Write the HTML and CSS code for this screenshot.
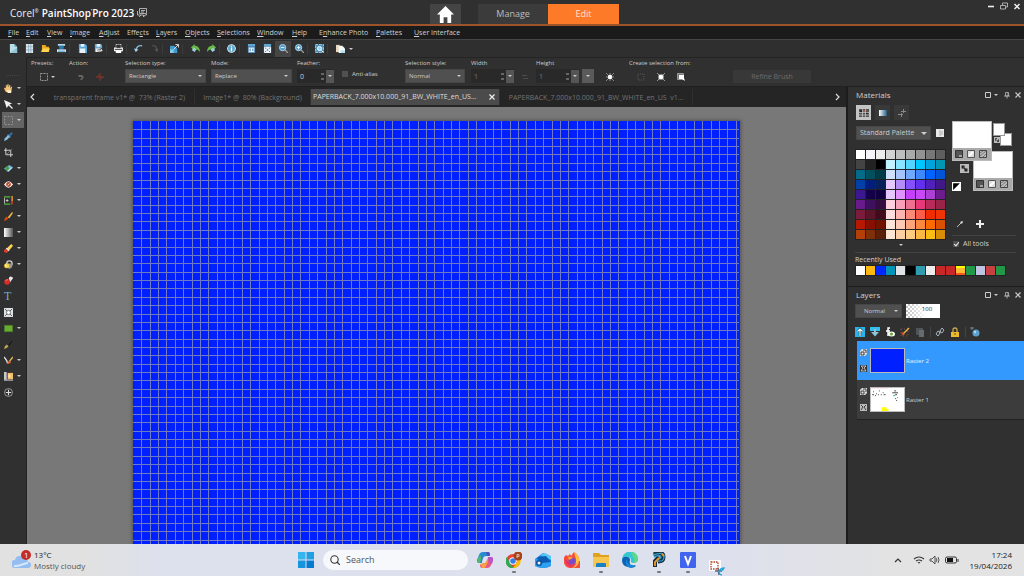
FILE: index.html
```html
<!DOCTYPE html>
<html lang="en">
<head>
<meta charset="utf-8">
<title>Corel PaintShop Pro 2023</title>
<link rel="stylesheet" href="styles.css">
</head>
<body>
<div class="app">
  <header class="titlebar">
    <div class="brand"><span class="brand-corel">Corel<sup>®</sup></span><span class="brand-name">PaintShop<sup>'</sup>Pro 2023</span>
      <svg class="i10" viewBox="0 0 10 10"><path d="M2.500.5h7v5h-7zM4 2.500h4M4 4h3M.5 3v4h6v2L8 7h1.500V6M2 9l2-2" fill="none" stroke="#bbb" stroke-width=".9"/></svg>
    </div>
    <nav class="modes">
      <button class="mode home" aria-label="Home"><svg viewBox="0 0 18 18"><path d="M9 0l9 9h-3v9h-4v-6H7v6H3V9H0z" fill="#fff"/></svg></button>
      <button class="mode manage">Manage</button>
      <button class="mode edit">Edit</button>
    </nav>
    <div class="window-controls">
      <button aria-label="Minimize"><svg class="i8" viewBox="0 0 8 8"><path d="M1 4.500h6" stroke="#eee" stroke-width="1.600"/></svg></button>
      <button aria-label="Restore"><svg class="i8" viewBox="0 0 8 8"><path d="M2.500 3V1h5v4H6M.5 3.500h5v3.500h-5z" fill="none" stroke="#ccc" stroke-width=".8"/></svg></button>
      <button aria-label="Close"><svg class="i8" viewBox="0 0 8 8"><path d="M1.500 2l5 5m0-5l-5 5" stroke="#eee" stroke-width="1.500"/></svg></button>
    </div>
  </header>

  <nav class="menubar">
    <a href="#"><u>F</u>ile</a><a href="#"><u>E</u>dit</a><a href="#"><u>V</u>iew</a><a href="#"><u>I</u>mage</a><a href="#"><u>A</u>djust</a><a href="#">Effe<u>c</u>ts</a><a href="#"><u>L</u>ayers</a><a href="#"><u>O</u>bjects</a><a href="#"><u>S</u>elections</a><a href="#"><u>W</u>indow</a><a href="#"><u>H</u>elp</a><a href="#">E<u>n</u>hance Photo</a><a href="#"><u>P</u>alettes</a><a href="#"><u>U</u>ser Interface</a>
  </nav>

  <div class="toolbar">
    <button aria-label="New"><svg viewBox="0 0 10 10"><path d="M1 0h5l3 3v7H1z" fill="#b9dfe9"/><path d="M6 0v3h3z" fill="#5f9fb5"/><path d="M1 10l8-6v6z" fill="#8fc4d6"/></svg></button>
    <button aria-label="New from template"><svg viewBox="0 0 10 10"><path d="M1 0h8v10H1z" fill="#dbe6ee"/><path d="M1 3h8M1 6.500h8M4 0v10M6.500 0v10" stroke="#7f9eb5" stroke-width=".7"/></svg></button>
    <button aria-label="Open"><svg viewBox="0 0 10 10"><path d="M1 1h4l1 2h3v6H1z" fill="#e9a91a"/><path d="M0 9l2-4h8L8 9z" fill="#ffd552"/></svg></button>
    <button aria-label="Scan"><svg viewBox="0 0 10 10"><path d="M1 0h8v2H1z" fill="#b8dcf0"/><path d="M2 2h6L7 6H3z" fill="#257cad"/><path d="M0 6h10v3H0z" fill="#dceaf2"/><path d="M1 8h8" stroke="#2e90c9"/></svg></button>
    <i class="sep wide"></i>
    <button aria-label="Save"><svg viewBox="0 0 10 10"><path d="M1 0h7l2 2v8H1z" fill="#5ba7d8"/><path d="M3 0h4v3H3zM2 5h6v5H2z" fill="#e7f2f8"/></svg></button>
    <button aria-label="Save as"><svg viewBox="0 0 10 10"><path d="M1 0h7l1 2v7H1z" fill="#68a9d4"/><path d="M3 0h4v3H3zM2 5h5v4H2z" fill="#eee"/><path d="M4 7h5M7 5l2 2-2 2" stroke="#222" stroke-width="2" fill="none"/><path d="M4 7h5M7 5l2 2-2 2" stroke="#fff" fill="none"/></svg></button>
    <i class="sep"></i>
    <button aria-label="Print"><svg viewBox="0 0 10 10"><path d="M2 0h6v4h2v4H0V4h2z" fill="#eee"/><path d="M3 1h4v3H3zM1 6h8" fill="#303030" stroke="#333"/><path d="M2 7h6v3H2z" fill="#fff"/></svg></button>
    <i class="sep"></i>
    <button aria-label="Undo"><svg viewBox="0 0 10 10"><path d="M9 2C5 1 2 4 2 8" fill="none" stroke="#83b9da" stroke-width="1.600"/><path d="M0 5l2 4 3-3z" fill="#a8d4ee"/></svg></button>
    <button aria-label="Redo"><svg viewBox="0 0 10 10"><path d="M2 2c4-1 6 2 6 6" fill="none" stroke="#485057" stroke-width="1.500"/><path d="M5 6l3 3 1-4z" fill="#505960"/></svg></button>
    <i class="sep"></i>
    <button aria-label="Resize"><svg viewBox="0 0 10 10"><path d="M0 2h8v8H0z" fill="#3c9ace"/><path d="M0 6h4v4H0z" fill="#8cc6e6"/><path d="M4 1h5v5z" fill="#303030"/><path d="M4 6l5-5M6 .5h3.500V4" fill="none" stroke="#eee"/></svg></button>
    <i class="sep wide"></i>
    <button aria-label="Rotate left"><svg viewBox="0 0 10 10"><path d="M0 4l4-4v2c4 0 6 3 6 7-2-3-3-3-6-3v2z" fill="#67b947"/><path d="M3 4l3 2-2 3-3-2z" fill="#9ccbe0"/></svg></button>
    <button aria-label="Rotate right"><svg viewBox="0 0 10 10"><path d="M10 4L6 0v2C2 2 0 5 0 9c2-3 3-3 6-3v2z" fill="#67b947"/><path d="M7 4L4 6l2 3 3-2z" fill="#9ccbe0"/></svg></button>
    <i class="sep"></i>
    <button aria-label="Information"><svg viewBox="0 0 10 10"><circle cx="5" cy="5" r="4.800" fill="#eef7fb"/><circle cx="5" cy="5" r="3.800" fill="#5ca8cf"/><path d="M5 4v4M5 2v1" stroke="#fff" stroke-width="1.400"/></svg></button>
    <i class="sep"></i>
    <button aria-label="Actual size"><svg viewBox="0 0 10 10"><path d="M1 0h8v3H1z" fill="#5ea6d4"/><path d="M1 3h8v7H1z" fill="#5487b5"/><path d="M2 4h6v5H2z" fill="#eef6fc"/><path d="M3.500 5v3M6.500 5v3" stroke="#2973ab"/></svg></button>
    <button aria-label="Fit window"><svg viewBox="0 0 10 10"><path d="M1 0h8v3H1z" fill="#5ea6d4"/><path d="M1 3h8v7H1z" fill="#eef6fc"/><path d="M2 4l6 5M8 4L2 9" stroke="#4479a7" stroke-dasharray="2 1"/></svg></button>
    <button class="on" aria-label="Zoom out"><svg viewBox="0 0 10 10"><circle cx="4" cy="4" r="3.500" fill="#4a9bd0" stroke="#b6daf0"/><path d="M6.500 6.500L10 10" stroke="#999" stroke-width="1.500"/><path d="M2 4h4" stroke="#fff"/></svg></button>
    <button aria-label="Zoom in"><svg viewBox="0 0 10 10"><circle cx="4" cy="4" r="3.500" fill="#4a9bd0" stroke="#b6daf0"/><path d="M6.500 6.500L10 10" stroke="#999" stroke-width="1.500"/><path d="M2 4h4M4 2v4" stroke="#fff"/></svg></button>
    <i class="sep"></i>
    <button aria-label="Full screen"><svg viewBox="0 0 10 10"><path d="M.5.5h9v9h-9z" fill="#4d91ba" stroke="#a8cfe2" stroke-dasharray="3 1"/><circle cx="5" cy="5" r="2.300" fill="#9ed0ec" stroke="#fff"/><path d="M7 7l2 2" stroke="#fff"/></svg></button>
    <i class="sep wide"></i>
    <button aria-label="Copy"><svg viewBox="0 0 10 10"><path d="M0 1h4v8H0z" fill="#e8d7bc"/><path d="M3 2h4l3 3v5H3z" fill="#f2fafc"/><path d="M5 7h5v3H5z" fill="#b7deeb"/></svg></button>
    <i class="caret"></i>
  </div>

  <div class="workspace">
    <aside class="tools" id="tools">
      <i class="grip"></i>
      <button aria-label="Pan"><svg viewBox="0 0 10 10"><path d="M2 9L0 5l1-1 1 1V1h1v3l1-4h1v4l1-3h1v4l1-2h1L8 9z" fill="#f6c375"/><path d="M3 7h5v3H4z" fill="#fff0ce"/></svg><i class="caret"></i></button>
      <button aria-label="Pick"><svg viewBox="0 0 10 10"><path d="M0 0l9 4-3 1 4 4-1 1-4-4-2 3z" fill="#f1f1f1"/></svg><i class="caret"></i></button>
      <button class="on" aria-label="Selection"><svg viewBox="0 0 10 10"><path d="M.5.5h9v9h-9z" fill="none" stroke="#999" stroke-dasharray="2 1.500"/></svg><i class="caret"></i></button>
      <button aria-label="Dropper"><svg viewBox="0 0 10 10"><path d="M0 10l1-3 4-4 2 2-4 4z" fill="#86bfe0"/><path d="M4 3l3 3" stroke="#6ba7d1" stroke-width="1.400"/><path d="M6 4l3-3" stroke="#2878bd" stroke-width="2.200"/></svg></button>
      <button aria-label="Crop"><svg viewBox="0 0 10 10"><path d="M2 0v7.500h8M0 2.500h7.500V10" fill="none" stroke="#ddd"/><path d="M3 7l6-6" stroke="#999" stroke-width=".7"/></svg></button>
      <button aria-label="Straighten"><svg viewBox="0 0 10 10"><path d="M0 5l6-4 4 3-5 5z" fill="#76b9dd"/><path d="M1 4l3-2 2 3-3 3z" fill="#4a9a48"/><path d="M4 8l5-4" stroke="#d7edf7"/></svg><i class="caret"></i></button>
      <button aria-label="Red eye"><svg viewBox="0 0 10 10"><path d="M0 5q5-7 10 0-5 7-10 0" fill="#f5eeee"/><circle cx="5" cy="5" r="2.700" fill="#b54d31"/><path d="M4 6l2-2" stroke="#f2d8cc"/></svg><i class="caret"></i></button>
      <button aria-label="Clone"><svg viewBox="0 0 10 10"><path d="M0 1h7M0 9h7" stroke="#54b63d" stroke-width="1.300"/><path d="M.5 2v6M3.500 3.500v3M2 5h3" stroke="#ddd" stroke-width=".9"/><path d="M9 0v6" stroke="#e69b33" stroke-width="1.600"/><path d="M8 6h2v3l-2 1z" fill="#bd402b"/></svg><i class="caret"></i></button>
      <button aria-label="Paint brush"><svg viewBox="0 0 10 10"><path d="M4 6l5-6 1 1-4 6z" fill="#f2b648"/><path d="M3 5l2 2-2 2-3 1 1-3z" fill="#d44b18"/></svg><i class="caret"></i></button>
      <button aria-label="Gradient"><svg viewBox="0 0 10 10"><defs><linearGradient id="gg"><stop stop-color="#fff"/><stop offset="1" stop-color="#555"/></linearGradient></defs><path d="M0 0h10v10H0z" fill="url(#gg)"/></svg><i class="caret"></i></button>
      <button aria-label="Eraser"><svg viewBox="0 0 10 10"><path d="M3 5l5-5 2 2-5 6z" fill="#ffd352"/><path d="M2 5l3 3-2 2-3-1V7z" fill="#df3c27"/><path d="M2.500 4.500l3 3" stroke="#eee" stroke-width="1.200"/></svg><i class="caret"></i></button>
      <button aria-label="Flood fill"><svg viewBox="0 0 10 10"><circle cx="6" cy="4" r="3" fill="none" stroke="#ccc" stroke-width="1.500"/><path d="M4 4h5v4L6 10 2 7z" fill="#9b9b91"/><circle cx="3" cy="6.500" r="2.800" fill="#f4ce45"/><circle cx="2" cy="6" r="1" fill="#fff6b4"/></svg><i class="caret"></i></button>
      <button aria-label="Color changer"><svg viewBox="0 0 10 10"><path d="M5 5l3-4 2 1-3 5z" fill="#ddd"/><circle cx="7.500" cy="2.500" r="2" fill="#e9e9e9"/><circle cx="3.500" cy="6.500" r="3.200" fill="#de2929"/><path d="M2 5l2-1" stroke="#ff9d8d"/></svg></button>
      <button aria-label="Text" class="text-tool">T</button>
      <button aria-label="Texture"><svg viewBox="0 0 10 10"><path d="M0 0h10v10H0z" fill="#dde2e5"/><path d="M1 1l8 8M9 1L1 9" stroke="#444" stroke-width=".9"/><circle cx="5" cy="5" r="2.300" fill="#fff" stroke="#555" stroke-width=".8"/></svg></button>
      <button aria-label="Rectangle"><svg viewBox="0 0 10 10"><path d="M.5 1.500h9v7h-9z" fill="#66ad31" stroke="#4c8026" stroke-dasharray="2 1"/></svg><i class="caret"></i></button>
      <button aria-label="Oil brush"><svg viewBox="0 0 10 10"><path d="M4 6l5-6 1 1-4 6z" fill="#101010" stroke="#555" stroke-width=".4"/><path d="M3 5l2 2-2 2-3 1 1-3z" fill="#bba851"/></svg></button>
      <button aria-label="Warp brush"><svg viewBox="0 0 10 10"><path d="M0 1l3 4 1 3" fill="none" stroke="#ddd" stroke-width="1.600"/><path d="M10 1L6 6" stroke="#ecbb5a" stroke-width="1.500"/><path d="M6 5l2 2-3 2-2-1z" fill="#dd6a33"/></svg><i class="caret"></i></button>
      <button aria-label="Mixer"><svg viewBox="0 0 10 10"><path d="M0 0h3v9H0z" fill="#c8c8c8"/><path d="M4 1h6v7H4z" fill="#f3bc69"/><path d="M0 9h10" stroke="#aaa" stroke-width="1.500"/><path d="M5 3h2v3H5z" fill="#fff0c8"/></svg><i class="caret"></i></button>
      <button aria-label="Add tools"><svg viewBox="0 0 10 10"><circle cx="5" cy="5" r="4.400" fill="none" stroke="#bbb" stroke-width=".8"/><path d="M5 2v6M2 5h6" stroke="#ddd" stroke-width="1.200"/></svg></button>
    </aside>

    <div class="content">
      <div class="options">
        <div class="field"><span class="lab">Presets:</span><button class="ctl flat" aria-label="Presets"><svg class="i8" viewBox="0 0 8 8"><path d="M.5.5h7v7h-7z" fill="none" stroke="#999" stroke-dasharray="2 1"/></svg><i class="caret"></i></button></div>
        <div class="field"><span class="lab">Action:</span><div class="ctl pair"><svg class="i8" viewBox="0 0 8 8"><path d="M1 2h4l2 2-2 3H3l2-3H2z" fill="#66655f"/></svg><svg class="i8" viewBox="0 0 8 8"><path d="M4 0v8M0 4h8M2 2l4 4" stroke="#743329" stroke-width="1.300"/></svg></div></div>
        <div class="field"><label class="lab" for="seltype">Selection type:</label><span class="pick w80"><select id="seltype"><option>Rectangle</option></select></span></div>
        <div class="field"><label class="lab" for="mode">Mode:</label><span class="pick w80"><select id="mode"><option>Replace</option></select></span></div>
        <div class="field"><label class="lab" for="feather">Feather:</label><span class="spin"><input id="feather" value="0"><i class="updown"></i><button aria-label="Feather slider"><i class="caret"></i></button></span></div>
        <label class="check alias"><input type="checkbox">Anti-alias</label>
        <div class="field"><label class="lab" for="style">Selection style:</label><span class="pick w59"><select id="style"><option>Normal</option></select></span></div>
        <div class="field dim"><label class="lab" for="sw">Width</label><span class="spin wide"><input id="sw" value="1"><i class="updown"></i><button aria-label="Width slider"><i class="caret"></i></button></span></div>
        <svg class="i8 swap" viewBox="0 0 8 8"><path d="M1 2.500h5M2 5.500h5" stroke="#4c4c4c"/></svg>
        <div class="field dim"><label class="lab" for="sh">Height</label><span class="spin wide"><input id="sh" value="1"><i class="updown"></i><button aria-label="Height slider"><i class="caret"></i></button></span></div>
        <button class="more" aria-label="More"><i class="caret"></i></button>
        <svg class="i8 star" viewBox="0 0 8 8"><path d="M0 0l8 8M8 0L0 8M4 0v8M0 4h8" stroke="#888"/><circle cx="4" cy="4" r="2.200" fill="#fff"/></svg>
        <div class="field"><span class="lab">Create selection from:</span><div class="ctl trio"><svg class="i8" viewBox="0 0 8 8"><path d="M1 1h6v6H1z" fill="none" stroke="#555" stroke-dasharray="1 1"/></svg><svg class="i8" viewBox="0 0 8 8"><path d="M1 1h6v6H1z" fill="#777"/><path d="M0 0l8 8M8 0L0 8" stroke="#999"/><circle cx="4" cy="4" r="2.300" fill="#fff"/></svg><svg class="i8" viewBox="0 0 8 8"><path d="M.5.5h6v6h-6z" fill="#777" stroke="#999"/><path d="M2 2h5v3l1 3-3-2H2z" fill="#fff"/></svg></div></div>
        <button class="refine" disabled>Refine Brush</button>
      </div>

      <div class="main">
        <section class="document">
          <div class="tabs">
            <button class="arrow" aria-label="Scroll left"><svg viewBox="0 0 5 8"><path d="M4 1L1 4l3 3" fill="none" stroke="#ddd" stroke-width="1.200"/></svg></button>
            <button class="tab t1">transparent frame v1* @&nbsp; 73% (Raster 2)</button>
            <button class="tab t2">Image1* @&nbsp; 80% (Background)</button>
            <button class="tab t3 active"><span>PAPERBACK_7.000x10.000_91_BW_WHITE_en_US...</span><svg viewBox="0 0 6 6"><path d="M.5.5l5 5m0-5l-5 5" stroke="#eee" stroke-width="1.200"/></svg></button>
            <button class="tab t4">PAPERBACK_7.000x10.000_91_BW_WHITE_en_US&nbsp; v1...</button>
            <button class="arrow right" aria-label="Scroll right"><svg viewBox="0 0 5 8"><path d="M1 1l3 3-3 3" fill="none" stroke="#ddd" stroke-width="1.200"/></svg></button>
          </div>
          <div class="stage"><div class="sheet"><svg id="sheet-grid" width="100%" height="100%"></svg></div></div>
        </section>

        <aside class="panels">
          <section class="panel materials">
            <div class="panel-head"><h2>Materials</h2><svg class="panel-icons" viewBox="0 0 38 8"><path d="M1.500 1.500h5v5h-5z" fill="none" stroke="#ccc"/><path d="M10 3h4l-2 2z" fill="#ccc"/><path d="M21.500 1.500h3V5h-3zM20 5h6M23 5v2.500M24 2v3" fill="none" stroke="#aaa" stroke-width=".9"/><path d="M31.500 1.500l5 5m0-5l-5 5" stroke="#ccc" stroke-width="1.200"/></svg></div>
            <div class="mat-tabs">
              <button class="on" aria-label="Swatches"><svg class="i10" viewBox="0 0 10 10"><path d="M0 1h10v8H0z" fill="#555"/><path d="M1 2h2v2H1zM7 4h2v2H7z" fill="#252525"/><path d="M4 2h2v2H4z" fill="#9b5a50"/><path d="M0 4.500h10M0 7h10M3.500 1v8M6.500 1v8" stroke="#ccc" stroke-width=".7"/></svg></button>
              <button aria-label="Color"><svg class="i10" viewBox="0 0 10 10"><defs><linearGradient id="cg"><stop stop-color="#fff"/><stop offset="1" stop-color="#245b7d"/></linearGradient></defs><path d="M1 2h8v6H1z" fill="url(#cg)"/></svg></button>
              <button aria-label="Sliders"><svg class="i10" viewBox="0 0 10 10"><path d="M1 6.500h5M4 3.500h5M6.500 1v4M4.500 5v4" stroke="#888"/></svg></button>
            </div>
            <div class="mat-body">
              <div class="mat-left">
                <div class="palette-row"><span class="pick w75"><select aria-label="Palette"><option>Standard Palette</option></select></span><svg class="i8" viewBox="0 0 8 8"><path d="M0 0h8v8H0z" fill="#e9e9e9"/><path d="M4 1v6M5 3h2M5 5h2" stroke="#999" stroke-width=".8"/></svg></div>
                <div class="swatches" id="palette"></div>
                <i class="caret mid"></i>
              </div>
              <div class="mat-right">
                <div class="colors">
                  <div class="well back"><svg class="well-bar" viewBox="0 0 38 12"><use href="#bar"/></svg></div>
                  <div class="well front"><svg class="well-bar" viewBox="0 0 38 12"><g id="bar"><path d="M0 0h38v12H0z" fill="#aaa"/><path d="M2.500 2.500h7v7h-7z" fill="#555" stroke="#333"/><path d="M6 8h3" stroke="#eee"/><path d="M14.500 2.500h7v7h-7z" fill="#ddd" stroke="#555"/><path d="M16 8l4-4" stroke="#fff" stroke-width="2"/><path d="M26.500 2.500h7v7h-7z" fill="#bbb" stroke="#444"/><path d="M27 5l3-2M27 8l6-5M30 9l3-3" stroke="#666" stroke-width=".8"/></g></svg></div>
                  <i class="mini m2"></i><i class="mini m1"></i>
                  <svg class="mini-swap" viewBox="0 0 8 8"><path d="M0 0h8v8H0z" fill="#bbb"/><path d="M2 5V2h2M3 4l3 2M6 3v3H4" fill="none" stroke="#222"/></svg>
                  <svg class="big-swap" viewBox="0 0 8 8"><path d="M0 0h8v8H0z" fill="#bbb"/><path d="M2 4V2h2M3 3l3 3M6 4v2H4" fill="none" stroke="#222" stroke-width="1.300"/></svg>
                  <svg class="bw" viewBox="0 0 8 8"><path d="M0 0h8v8H0z" fill="#fff"/><path d="M1 1h6L1 7z" fill="#000"/></svg>
                </div>
                <div class="mat-actions"><svg class="i8" viewBox="0 0 8 8"><path d="M1 7l4-4" stroke="#bbb"/><path d="M4 2l2 2 1-3z" fill="#eee"/></svg><svg class="i8" viewBox="0 0 8 8"><path d="M4 0v8M0 4h8" stroke="#eee" stroke-width="2"/></svg></div>
                <label class="check all"><input type="checkbox" checked>All tools</label>
              </div>
            </div>
            <div class="recent"><h3>Recently Used</h3><div class="swatches recent-row" id="recent"></div></div>
          </section>

          <section class="panel layers">
            <div class="panel-head"><h2>Layers</h2><svg class="panel-icons" viewBox="0 0 38 8"><path d="M1.500 1.500h5v5h-5z" fill="none" stroke="#ccc"/><path d="M10 3h4l-2 2z" fill="#ccc"/><path d="M21.500 1.500h3V5h-3zM20 5h6M23 5v2.500M24 2v3" fill="none" stroke="#aaa" stroke-width=".9"/><path d="M31.500 1.500l5 5m0-5l-5 5" stroke="#ccc" stroke-width="1.200"/></svg></div>
            <div class="blend"><span class="pick w46"><select aria-label="Blend mode"><option>Normal</option></select></span><input class="opacity" aria-label="Opacity" value="100"></div>
            <div class="layer-tools">
              <svg class="i10" viewBox="0 0 10 10"><path d="M0 0h10v10H0z" fill="#27b4ea"/><path d="M5 2v7M2.500 4.500L5 2l2.500 2.500" fill="none" stroke="#103f55" stroke-width="2.400"/><path d="M5 2v7M2.500 4.500L5 2l2.500 2.500" fill="none" stroke="#fff" stroke-width="1.200"/></svg>
              <svg class="i10" viewBox="0 0 10 10"><path d="M0 0h10v4H0z" fill="#35bdeb"/><path d="M4 2h2v3h3L5 9.500 1 5h3z" fill="#8fc4d6"/></svg>
              <svg class="i10" viewBox="0 0 10 10"><path d="M5 1H3v8M1 4h4" fill="none" stroke="#fff" stroke-width="1.500"/><ellipse cx="6.500" cy="7" rx="3.500" ry="2.500" fill="#fff"/><circle cx="6.500" cy="7" r="1.600" fill="#67a83f"/></svg>
              <svg class="i10" viewBox="0 0 10 10"><path d="M1 2h7v7H1z" fill="none" stroke="#8b5140" stroke-dasharray="1 2"/><path d="M3 7l6-6" stroke="#eeb14c" stroke-width="1.500"/><path d="M2 6l2 2" stroke="#e05321" stroke-width="2"/></svg>
              <svg class="i10" viewBox="0 0 10 10"><path d="M1 1h7v7H1z" fill="#505459"/><path d="M4 3h5v7H4z" fill="#666b70"/></svg>
              <i class="vline"></i>
              <svg class="i10" viewBox="0 0 10 10"><path d="M5 4l2-3 2 2-2 3-2-1M5 6L3 9 1 7l2-3 2 1M4 6l2-2" fill="none" stroke="#a5b2bc"/></svg>
              <svg class="i10" viewBox="0 0 10 10"><path d="M3 5V3q0-2 2-2t2 2v2" fill="none" stroke="#cba84c" stroke-width="1.300"/><path d="M1 5h8v5H1z" fill="#edb92d"/><path d="M5 6v2" stroke="#6c5112"/></svg>
              <i class="vline"></i>
              <svg class="i10" viewBox="0 0 10 10"><circle cx="6" cy="6" r="3.500" fill="#5ba0cf"/><circle cx="5" cy="5" r="1.200" fill="#b1dbef"/><path d="M0 1h4M2 0v3" stroke="#6e8491"/></svg>
            </div>
            <div class="layer-list">
              <div class="layer selected"><div class="layer-icons"><svg class="i7" viewBox="0 0 7 7"><path d="M0 2l2-2h5v5L5 7H0z" fill="#ddd"/><path d="M1 3h3v3H1zM3 1h3v3" fill="none" stroke="#333" stroke-width=".9"/></svg><svg class="i7" viewBox="0 0 7 7"><path d="M0 0h7v7H0z" fill="#333"/><path d="M1 1l2 2-2 3M6 1L4 3l2 3M1 1h5M1 6h5" fill="none" stroke="#ddd" stroke-width=".8"/></svg></div><div class="thumb blue"></div><span>Raster 2</span></div>
              <div class="layer"><div class="layer-icons"><svg class="i7" viewBox="0 0 7 7"><path d="M0 2l2-2h5v5L5 7H0z" fill="#ddd"/><path d="M1 3h3v3H1zM3 1h3v3" fill="none" stroke="#333" stroke-width=".9"/></svg><svg class="i7" viewBox="0 0 7 7"><path d="M0 0h7v7H0z" fill="#bbb"/><path d="M1 1l2 2-2 3M6 1L4 3l2 3" fill="none" stroke="#222" stroke-width=".8"/></svg></div><div class="thumb"><svg viewBox="0 0 34 24"><path d="M2 4h1M5 6h1M8 3h1M12 5h1M1 7h2M4 8h1M7 7h1M10 7h1M13 7h2M22 5h6M24 3h2M25 7h2M25 11h1M26 13h1" stroke="#444"/><path d="M23 8h2M27 10h1" stroke="#23a08b"/><path d="M11 20h5v2h-5zM11 22h7v2h-7z" fill="#ff0"/><path d="M0 0h17" stroke="#fcc"/></svg></div><span>Raster 1</span></div>
            </div>
          </section>
        </aside>
      </div>
    </div>
  </div>

  <footer class="taskbar">
    <div class="weather">
      <svg viewBox="0 0 20 20"><path d="M3 18a4 4 0 010-8 5 5 0 019-2 5 5 0 014 4 3 3 0 010 6z" fill="#94bdf0"/><path d="M2 16c5 1 9-3 14-3" stroke="#d7e9ff" fill="none" stroke-width="2"/><circle cx="14" cy="5" r="5" fill="#c42b2b"/><text x="12" y="8" class="badge">1</text></svg>
      <div><div>13°C</div><div class="muted">Mostly cloudy</div></div>
    </div>
    <nav class="dock">
      <button class="start" aria-label="Start"><svg viewBox="0 0 16 16"><path d="M0 0h7.500v7.500H0z" fill="#35b5ee"/><path d="M8.500 0H16v7.500H8.500z" fill="#209fe3"/><path d="M0 8.500h7.500V16H0z" fill="#1593dd"/><path d="M8.500 8.500H16V16H8.500z" fill="#057bcf"/></svg></button>
      <label class="search"><svg viewBox="0 0 10 10"><circle cx="4.500" cy="4.500" r="3.700" fill="none" stroke="#333" stroke-width="1.100"/><path d="M7 7l3 3" stroke="#333" stroke-width="1.200"/></svg><input type="search" placeholder="Search" aria-label="Search"></label>
      <button aria-label="Copilot"><svg viewBox="0 0 16 16"><path d="M2 3q1-3 4-3h5q2 0 2 3L9 5Q6 5 5 11H3Q-1 11 0 8z" fill="#268bd0"/><path d="M1 7l2-4q1 0 1 4l-1 4Q-1 11 1 7" fill="#5ab763"/><path d="M14 13q-1 3-4 3H5q-2 0-2-3l4-2q3 0 4-6h2q4 0 3 3z" fill="#e9548c"/><path d="M3 12l4-1q2 0 3-4l1 3-3 6H5z" fill="#f79d42"/><path d="M6 6q1-2 3-2h2q-1 2-1 3-1 4-3 4H5z" fill="#dde0ed"/><path d="M9 0h3q1 1 1 4h-3z" fill="#4c54bd"/><path d="M11 5h2q4 0 3 3l-1 4q-3-1-4-7" fill="#b258cb"/></svg></button>
      <button class="run" aria-label="Chrome"><svg viewBox="0 0 16 16"><circle cx="7" cy="9" r="7" fill="#e64335"/><path d="M1 5l4 8 3 3A7 7 0 011 5" fill="#34a853"/><path d="M8 6h6a7 7 0 01-7 10l4-6z" fill="#fbbc05"/><circle cx="7" cy="9" r="3.700" fill="#fff"/><circle cx="7" cy="9" r="2.800" fill="#347fe9"/><circle cx="12" cy="4" r="4.500" fill="#a64219"/><path d="M11 6V2.500h2v2h-2" fill="none" stroke="#f3d6c4" stroke-width=".8"/></svg></button>
      <button aria-label="Photos"><svg viewBox="0 0 16 16"><path d="M0 7l8-6 8 4v9q-8 4-16 0z" fill="#158ae6"/><path d="M5 3l5-2 6 3v4z" fill="#56c7f4"/><path d="M3 5l8-1 5 6v4L2 9z" fill="#0b5db3"/><path d="M0 7q5 0 7 4l9-1v4q-8 4-16 0z" fill="#2da0ef"/><circle cx="4" cy="11" r="3" fill="#0d4c97"/><circle cx="4" cy="11" r="1.500" fill="#e7f6ff"/></svg></button>
      <button aria-label="Firefox"><svg viewBox="0 0 16 16"><path d="M2 3l2 1 2-2 1 2 3-4q6 4 5 9A7 7 0 118 16 7.500 7.500 0 012 3" fill="#f64e3f"/><path d="M10 0q6 4 5 9-1 6-7 7 5-4 4-9z" fill="#ffc239"/><path d="M1 6q0 9 8 9l4-4-5 3z" fill="#ed2e64"/><circle cx="8" cy="9" r="3.500" fill="#794bc7"/><path d="M4 5q3-1 5 1l-4 2z" fill="#ff9e2c"/></svg></button>
      <button class="run" aria-label="Explorer"><svg viewBox="0 0 16 16"><path d="M0 1h6l2 2h8v12H0z" fill="#e0a020"/><path d="M0 5h16v10H0z" fill="#f6c64f"/><path d="M4 11h8q1 0 1 1v3H3v-3z" fill="#1881c6"/></svg></button>
      <button aria-label="Edge"><svg viewBox="0 0 16 16"><path d="M0 8A8 8 0 0116 7q0 4-5 4-3 0-2-3 0-3-4-3-4 0-5 3" fill="#37c6d0"/><path d="M9 0q7 1 7 7 0 4-5 4 3-3 0-6z" fill="#5bd98a"/><path d="M0 8q1-4 5-3 3 0 3 3-2 6 6 6-3 3-8 1-6-1-6-7" fill="#0c62b5"/><path d="M5 7q-1 7 9 6-3 4-8 2-4-4-1-8" fill="#1687d4"/></svg></button>
      <button class="run" aria-label="PaintShop Pro"><svg viewBox="0 0 16 16"><path d="M3 3q9-4 9 2 0 4-5 4" fill="none" stroke="#182a3d" stroke-width="5"/><path d="M4 15V9l4-4" fill="none" stroke="#182a3d" stroke-width="4"/><path d="M2 3q11-4 11 2 0 5-6 4M3 5q6-3 7 0 0 2-3 2" fill="none" stroke="#379fc5" stroke-width="1.400"/><path d="M4 14v-4l4-4M11 2l2 2" fill="none" stroke="#eb9d2b" stroke-width="1.800"/></svg></button>
      <button class="run" aria-label="V app"><svg viewBox="0 0 16 16"><rect width="16" height="16" rx="1" fill="#4064ed"/><path d="M5 4l3 8 3-8" fill="none" stroke="#fff" stroke-width="2"/></svg></button>
      <button class="snip" aria-label="Snipping Tool"><svg viewBox="0 0 16 16"><rect width="12" height="11" rx="1" fill="#fff"/><path d="M2 2h7v7H2z" fill="none" stroke="#b64428" stroke-width="1.300" stroke-dasharray="1.500 1"/><path d="M9 8l1 7M6 11h7" stroke="#667" stroke-width="1.500"/><path d="M10 11q2-3 5-3-1 3-5 3m0 0q0 4 3 4" fill="none" stroke="#24a6d7" stroke-width="1.300"/></svg></button>
    </nav>
    <div class="tray">
      <svg viewBox="0 0 64 12"><path d="M1 8l3-3 3 3" fill="none" stroke="#333" stroke-width="1.200"/><path d="M20 5q5-4 10 0M22 7q3-2 6 0M24 9q1-1 2 0" fill="none" stroke="#333" stroke-width="1.100"/><path d="M36 5h2l3-3v8L38 7h-2zM42 4q2 2 0 4M44 3q2 3 0 6" fill="none" stroke="#444" stroke-width=".9"/><rect x="51.500" y="3" width="11" height="6" rx="1.500" fill="none" stroke="#333"/><path d="M53 4h6v4h-6z" fill="#111"/><path d="M64 5v3" stroke="#333"/></svg>
      <div class="clock"><div>17:24</div><div>19/04/2026</div></div>
    </div>
  </footer>
</div>
<script src="app.js"></script>
</body>
</html>
```
FILE: styles.css
```css
* { box-sizing: border-box; }
body { margin: 0; background: #2f2f2f; color: #d0d0d0; font: 7px/10px "Open Sans", "Noto Sans", sans-serif; }
button, input, select { font: inherit; color: inherit; margin: 0; padding: 0; border: 0; border-radius: 0; background: none; }
button { display: flex; align-items: center; justify-content: center; }
a { color: inherit; text-decoration: none; }
svg { display: block; flex: none; }
h2, h3 { margin: 0; font-weight: 400; }
.app { height: 100vh; display: flex; flex-direction: column; overflow: hidden; }
.i10 { width: 10px; height: 10px; }
.i8 { width: 8px; height: 8px; }
.i7 { width: 7px; height: 7px; }
.caret { flex: none; width: 0; height: 0; border: 2px solid transparent; border-top-color: #ccc; border-bottom: 0; }

.titlebar { flex: none; height: 26px; display: grid; grid-template-columns: 42% 1fr auto; border-bottom: 2px solid #9d542d; background: #303030; }
.brand { display: flex; align-items: center; gap: 3px; padding-left: 10px; padding-top: 2px; font-size: 10px; line-height: 14px; color: #eee; white-space: nowrap; }
.brand sup { font-size: 5px; line-height: 5px; }
.brand-name { font-weight: 600; color: #fff; }
.modes { display: flex; align-items: flex-end; }
.mode { height: 20px; background: #3b3b3b; font-size: 9px; color: #bbb; }
.home { width: 31px; margin-right: 17px; background: #444; }
.home svg { width: 17px; height: 17px; }
.manage { width: 70px; }
.edit { width: 71px; background: #fc7a28; color: #ffe2cc; }
.window-controls { display: flex; align-items: flex-start; gap: 5px; padding: 2px 3px 0 0; }

.menubar { flex: none; height: 13px; display: grid; grid-template-columns: 18px 21px 23px 29px 28px 29px 29px 32px 40px 35px 27px 57px 38px auto; justify-content: start; align-items: center; padding-left: 8px; background: #1b1b1b; white-space: nowrap; font-size: 7px; }
.menubar u { text-underline-offset: 1px; }

.toolbar { flex: none; height: 18px; display: flex; align-items: center; padding-left: 5px; border-top: 1px solid #454545; }
.toolbar button { width: 16px; height: 16px; }
.toolbar svg { width: 9px; height: 9px; }
.toolbar .on { background: #454545; }
.sep { flex: none; width: 4px; height: 10px; border-left: 1px solid #3c3c3c; }
.sep.wide { width: 5px; }
.toolbar .caret { margin-left: 1px; }

.workspace { flex: 1; min-height: 0; display: flex; }
.tools { flex: none; width: 27px; padding: 18px 2px 0 2px; background: #303030; border-right: 1px solid #222; display: flex; flex-direction: column; }
.grip { flex: none; width: 12px; height: 2px; margin: 0 0 3px 5px; border-top: 1px dotted #444; }
.tools button { flex: none; width: 100%; height: 16px; padding-left: 2px; gap: 4px; justify-content: flex-start; }
.tools button svg { width: 9px; height: 9px; }
.tools .on { background: #646464; }
.tools .text-tool { font: 12px/14px "Liberation Serif", serif; color: #78a9cb; }

.content { flex: 1; min-width: 0; display: flex; flex-direction: column; }
.options { flex: none; height: 30px; display: grid; grid-template-columns: 38px 56px 86px 86px 45px 63px 66px 50px 15px 46px 20px 27px 104px 78px; padding-left: 4px; background: #303030; border-top: 1px solid #242424; border-bottom: 1px solid #202020; font-size: 6px; }
.field { min-width: 0; white-space: nowrap; }
.lab { display: block; height: 11px; line-height: 10px; color: #ccc; }
.ctl { height: 15px; display: flex; align-items: center; }
.flat { gap: 3px; padding-left: 9px; }
.pair { gap: 11px; padding-left: 8px; }
.trio { gap: 12px; padding-left: 8px; }
.pick { position: relative; display: block; height: 14px; }
.pick select { appearance: none; width: 100%; height: 100%; padding: 0 8px 0 3px; background: #505050; border: 1px solid #464646; color: #ccc; }
.pick::after { content: ""; position: absolute; right: 4px; top: 6px; border: 2px solid transparent; border-top-color: #ccc; border-bottom: 0; }
.w80 { width: 81px; }
.w59 { width: 60px; }
.w75 { width: 75px; }
.w46 { width: 47px; }
.spin { display: flex; width: 37px; height: 14px; align-items: center; background: #292929; }
.spin input { flex: 1; min-width: 0; width: 10px; padding-left: 3px; height: 14px; font-size: 7px; }
.spin.wide { width: 43px; }
.spin button { width: 8px; height: 13px; background: #555; }
.updown { width: 8px; height: 10px; background: linear-gradient(#666, #666) center 2px / 3px 2px no-repeat, linear-gradient(#666, #666) center 7px / 3px 2px no-repeat; }
.dim .spin input { color: #777; }
.check { display: flex; align-items: center; gap: 4px; }
.check input { appearance: none; width: 6px; height: 6px; background: #505050; }
.alias { height: 14px; margin-top: 9px; }
.swap { margin: 15px 0 0; }
.more { width: 12px; height: 14px; margin-top: 11px; background: #5a5a5a; }
.star { margin: 15px 0 0 4px; }
.refine { height: 13px; margin-top: 12px; background: #383838; color: #6c6c6c; font-size: 7px; }

.main { flex: 1; min-height: 0; display: flex; }
.document { flex: 1; min-width: 0; display: flex; flex-direction: column; }
.tabs { flex: none; height: 20px; display: flex; align-items: center; background: #252525; white-space: nowrap; }
.arrow { width: 10px; height: 16px; }
.arrow svg { width: 5px; height: 8px; }
.arrow.right { margin-left: auto; width: 18px; }
.tab { flex: none; height: 16px; padding-top: 1px; font-size: 7px; color: #747474; border-right: 1px solid #303030; overflow: hidden; }
.t1 { width: 158px; padding-left: 8px; }
.t2 { width: 116px; }
.t3 { width: 189px; justify-content: space-between; padding: 0 4px 0 2px; }
.t3 svg { width: 6px; height: 6px; }
.t4 { width: 193px; }
.tab.active { background: #4b4b4b; color: #ddd; }
.stage { flex: 1; min-height: 0; background: #787878; padding: 14px 13% 0; overflow: hidden; }
.sheet { width: 100%; height: 100%; background: #0020ff; box-shadow: 0 0 3px 1px #555; }
.sheet svg { width: 100%; height: 100%; }

.panels { flex: none; width: 178px; border-left: 2px solid #1c1c1c; background: #303030; display: flex; flex-direction: column; }
.panel-head { display: flex; align-items: center; justify-content: space-between; height: 16px; padding: 0 2px 0 8px; }
.panel-head h2 { font-size: 8px; line-height: 12px; }
.panel-icons { width: 38px; height: 8px; }
.materials { height: 200px; border-bottom: 1px solid #1d1d1d; }
.mat-tabs { display: flex; gap: 4px; padding: 2px 0 0 8px; }
.mat-tabs button { width: 15px; height: 15px; background: #393939; }
.mat-tabs .on { background: #c4c4c4; }
.mat-body { display: flex; padding: 1px 0 0 7px; height: 132px; }
.mat-left { width: 97px; padding-top: 5px; }
.palette-row { display: flex; align-items: center; gap: 5px; height: 14px; padding-left: 1px; margin-bottom: 9px; }
.palette-row select { font-size: 7px; }
.palette-row .pick::after { border-width: 3px 3px 0; }
.swatches { display: grid; grid-template-columns: repeat(9, 10px); width: 91px; border: 1px solid #222; border-width: 1px 0 0 1px; }
.swatches i { height: 10px; border: 1px solid #222; border-width: 0 1px 1px 0; }
.caret.mid { display: block; margin: 4px auto 0 44px; }
.mat-right { width: 64px; }
.colors { position: relative; height: 96px; }
.well { position: absolute; width: 40px; height: 40px; background: #fff; border: 1px solid #bbb; display: flex; align-items: flex-end; }
.well-bar { width: 38px; height: 12px; }
.front { left: 0; top: 0; }
.back { left: 21px; top: 30px; }
.mini { position: absolute; width: 12px; height: 13px; background: #fff; border: 1px solid #999; }
.m1 { left: 41px; top: 2px; }
.m2 { left: 48px; top: 12px; }
.mini-swap { position: absolute; left: 42px; top: 16px; width: 6px; height: 6px; }
.big-swap { position: absolute; left: 8px; top: 43px; width: 9px; height: 9px; }
.bw { position: absolute; left: 0; top: 61px; width: 9px; height: 9px; }
.mat-actions { display: flex; gap: 12px; padding: 3px 0 0 4px; height: 18px; }
.all { border-top: 1px solid #444; height: 16px; padding-left: 1px; font-size: 7px; }
.all input { position: relative; }
.all input:checked::after { content: ""; position: absolute; left: 2px; top: 0; width: 2px; height: 4px; border: solid #eee; border-width: 0 1px 1px 0; rotate: 40deg; }
.recent { margin: 0 8px 0 7px; padding-top: 2px; border-top: 1px solid #444; }
.recent h3 { font-size: 7px; line-height: 10px; }
.recent-row { grid-template-columns: repeat(15, 10px); width: 151px; }

.layers { flex: 1; }
.blend { display: flex; gap: 4px; align-items: center; height: 16px; padding-left: 7px; }
.blend select { padding-left: 8px; font-size: 6px; }
.opacity { width: 34px; height: 14px; text-align: center; padding: 0 0 4px 8px; font-size: 6px; color: #222; background: linear-gradient(90deg, transparent, #fff 60%), conic-gradient(#bbb 25%, #fff 0 50%, #bbb 0 75%, #fff 0) 0 0 / 4px 4px; }
.layer-tools { display: flex; align-items: center; gap: 5px; height: 22px; padding: 3px 0 0 7px; }
.vline { width: 1px; height: 10px; background: #444; }
.vline + svg { margin-left: -1px; }
.layer-list { margin-left: 9px; border-bottom: 1px solid #222; }
.layer { display: flex; align-items: center; gap: 3px; height: 39px; padding-left: 3px; background: #3c3c3c; font-size: 6px; }
.layer > span { margin-left: -2px; }
.selected { background: #3399ff; color: #eaf4ff; }
.layer-icons { display: grid; gap: 9px; }
.thumb { width: 35px; height: 25px; background: #fff; border: 1px solid #bbb; }
.thumb svg { width: 100%; height: 100%; }
.blue { background: #0020ff; }

.taskbar { flex: none; height: 32px; display: grid; grid-template-columns: 1fr auto 1fr; align-items: center; background: linear-gradient(90deg, #e1e1e1 8%, #dde0ed 16%, #dde0ed 70%, #e3e3e3 88%); color: #222; }
.weather { display: flex; align-items: center; gap: 2px; padding-left: 12px; font-size: 8px; line-height: 11px; }
.weather svg { width: 20px; height: 20px; }
.weather, .clock { letter-spacing: normal; }
.badge { font-size: 8px; fill: #fff; }
.muted { color: #555; }
.dock { display: flex; align-items: center; margin-right: 4px; }
.dock button { position: relative; width: 29px; height: 32px; }
.dock button svg { width: 16px; height: 16px; }
.dock .run::after { content: ""; position: absolute; bottom: 3px; width: 4px; height: 2px; border-radius: 1px; background: #777; }
.dock .start { width: 35px; }
.search { display: flex; align-items: center; gap: 6px; width: 145px; height: 20px; padding-left: 7px; margin-right: 2px; border-radius: 10px; background: #f7f8fc; }
.search svg { width: 10px; height: 10px; }
.search input { width: 100px; font-size: 9px; outline: 0; }
.search input::placeholder { color: #555; }
.dock .snip { align-items: flex-end; width: 30px; }
.tray { display: flex; align-items: center; justify-content: flex-end; gap: 11px; padding-right: 12px; }
.tray svg { width: 66px; height: 12px; }
.clock { text-align: right; font-size: 8px; line-height: 11px; }
```
FILE: app.js
```js
const palette = [
  "ffffff f4f4fa ececec d2d4d4 bcbebe a9a9a9 929292 777777 5e5e5e",
  "444444 222222 000000 c2f2ff 88e4ff 52d4ff 00c6ff 00a4dc 0096b4",
  "006c8a 00505e 003c48 cfe0fb a5c4fb 70a8ff 3c88fc 0062ff 0054d8",
  "0040a8 001f7c 06205c e4c8ff b48cf8 8450fc 6030ec 5020bc 401888",
  "3c1890 14004a 100040 e4c8ff e090ff c440fc c848f8 ac40d4 6c1c8c",
  "681c8c 401060 340c40 fcd0dc f8a0b8 ec7090 e83878 b82c5c 982448",
  "7c1c3c 5c1428 400c1c fcdcdc fcb4b0 fc8878 fc5c48 f02c00 f03408",
  "b81800 881000 701400 fce4d8 fccab4 fca47c fc8840 fc6a00 d85000",
  "b44008 803008 5c2008 fde6d4 fccea4 fccc80 fcb844 fcbc14 d88c08"
];
const recent = "ffffff ffb810 0028ff 0094b8 dfe3e8 000000 309cb0 ececec c82828 c82828 ffc020 209848 c0c4e4 c84040 209848";

function fill(id, colors) {
  const box = document.getElementById(id);
  colors.split(" ").forEach(c => {
    const cell = document.createElement("i");
    cell.style.background = c === "ffc020" ? "linear-gradient(#ff0 25%, #fb3 25% 75%, #f52 75%)" : "#" + c;
    box.append(cell);
  });
}
fill("palette", palette.join(" "));
fill("recent", recent);

// Ruler grid over the sheet, one line per cell boundary.
const step = 8.37;
const grid = document.getElementById("sheet-grid");
const { width, height } = grid.getBoundingClientRect();
let d = "";
for (let x = step; x < width; x += step) d += `M${Math.round(x) + 0.5} 0V${height}`;
for (let y = step; y < height; y += step) d += `M0 ${Math.round(y) + 0.5}H${width}`;
const path = document.createElementNS("http://www.w3.org/2000/svg", "path");
path.setAttribute("d", d);
path.setAttribute("stroke", "#6f7cc4");
path.setAttribute("fill", "none");
grid.append(path);
```
